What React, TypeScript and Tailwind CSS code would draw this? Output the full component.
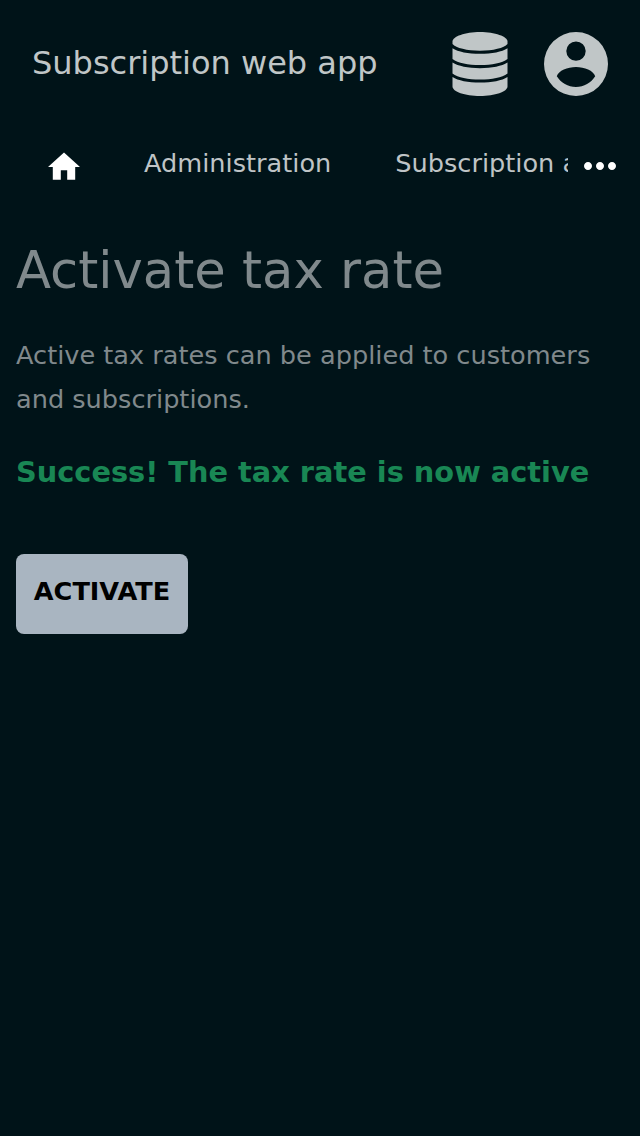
import { MdHome, MdMoreHoriz } from "react-icons/md";

function DatabaseIcon() {
  return (
    <svg className="h-16 w-14" viewBox="0 0 56 64" fill="currentColor">
      <path d="M28 0C43 0 55.5 4.6 55.5 9.5V12C52 16 41 18.7 28 18.7S4 16 .5 12V9.5C.5 4.6 13 0 28 0Z" />
      <path d="M.5 16.2C6 19.8 16 21.8 28 21.8S50 19.8 55.5 16.2V27C50 31 40 33 28 33S6 31 .5 27Z" />
      <path d="M.5 30.6C6 34.2 16 36.2 28 36.2S50 34.2 55.5 30.6V41.4C50 45.4 40 47.4 28 47.4S6 45.4 .5 41.4Z" />
      <path d="M.5 45C6 48.6 16 50.6 28 50.6S50 48.6 55.5 45V54.5C55.5 59.6 43 64 28 64S.5 59.6 .5 54.5Z" />
    </svg>
  );
}

function AccountIcon() {
  return (
    <svg className="ml-9 h-16 w-16" viewBox="0 0 64 64" fill="currentColor">
      <path
        fillRule="evenodd"
        d="M32 0a32 32 0 1 1 0 64a32 32 0 1 1 0-64ZM32 9.4a9.7 9.7 0 1 0 0 19.4a9.7 9.7 0 1 0 0-19.4ZM12.8 44.2C14.5 38.6 23.5 35 32 35s17.5 3.6 19.2 9.2C47.1 50.8 40 55 32 55S16.9 50.8 12.8 44.2Z"
      />
    </svg>
  );
}

export default function App() {
  return (
    <div className="flex min-h-[1136px] w-[640px] flex-col bg-[#001318] font-['DejaVu_Sans',sans-serif] text-[#80898c]">
      <header className="flex h-32 items-center pl-8 pr-8 text-[#c0c6c7]">
        <div className="flex-1 pb-0.5 text-[32px] leading-[48px]">Subscription web app</div>
        <DatabaseIcon />
        <AccountIcon />
      </header>
      <nav className="flex h-[76px] items-center text-[25.6px] leading-10 text-[#bfc4c6]">
        <div className="flex w-[568px] items-center overflow-hidden whitespace-nowrap pb-0.5">
          <MdHome className="ml-12 mt-1 h-8 w-8 shrink-0 text-white" viewBox="2 2 20 20" />
          <span className="ml-16 pb-1">Administration</span>
          <span className="ml-16 pb-1">Subscription administration</span>
        </div>
        <MdMoreHoriz className="ml-4 h-8 w-8 text-white" viewBox="4 4 16 16" />
      </nav>
      <main className="px-4 pt-8">
        <h1 className="text-[51.2px] leading-[68px]">Activate tax rate</h1>
        <p className="mt-[29px] text-[25.6px] leading-[44px]">
          Active tax rates can be applied to customers and subscriptions.
        </p>
        <p className="mt-[29px] whitespace-nowrap text-[28.8px] font-bold leading-[44px] text-[#198754]">
          Success! The tax rate is now active
        </p>
        <button className="mt-[60px] flex h-20 w-[172px] justify-center rounded-lg bg-[#a9b5c1] pt-[17px] text-[25.6px] font-bold leading-10 text-black">
          ACTIVATE
        </button>
      </main>
    </div>
  );
}
